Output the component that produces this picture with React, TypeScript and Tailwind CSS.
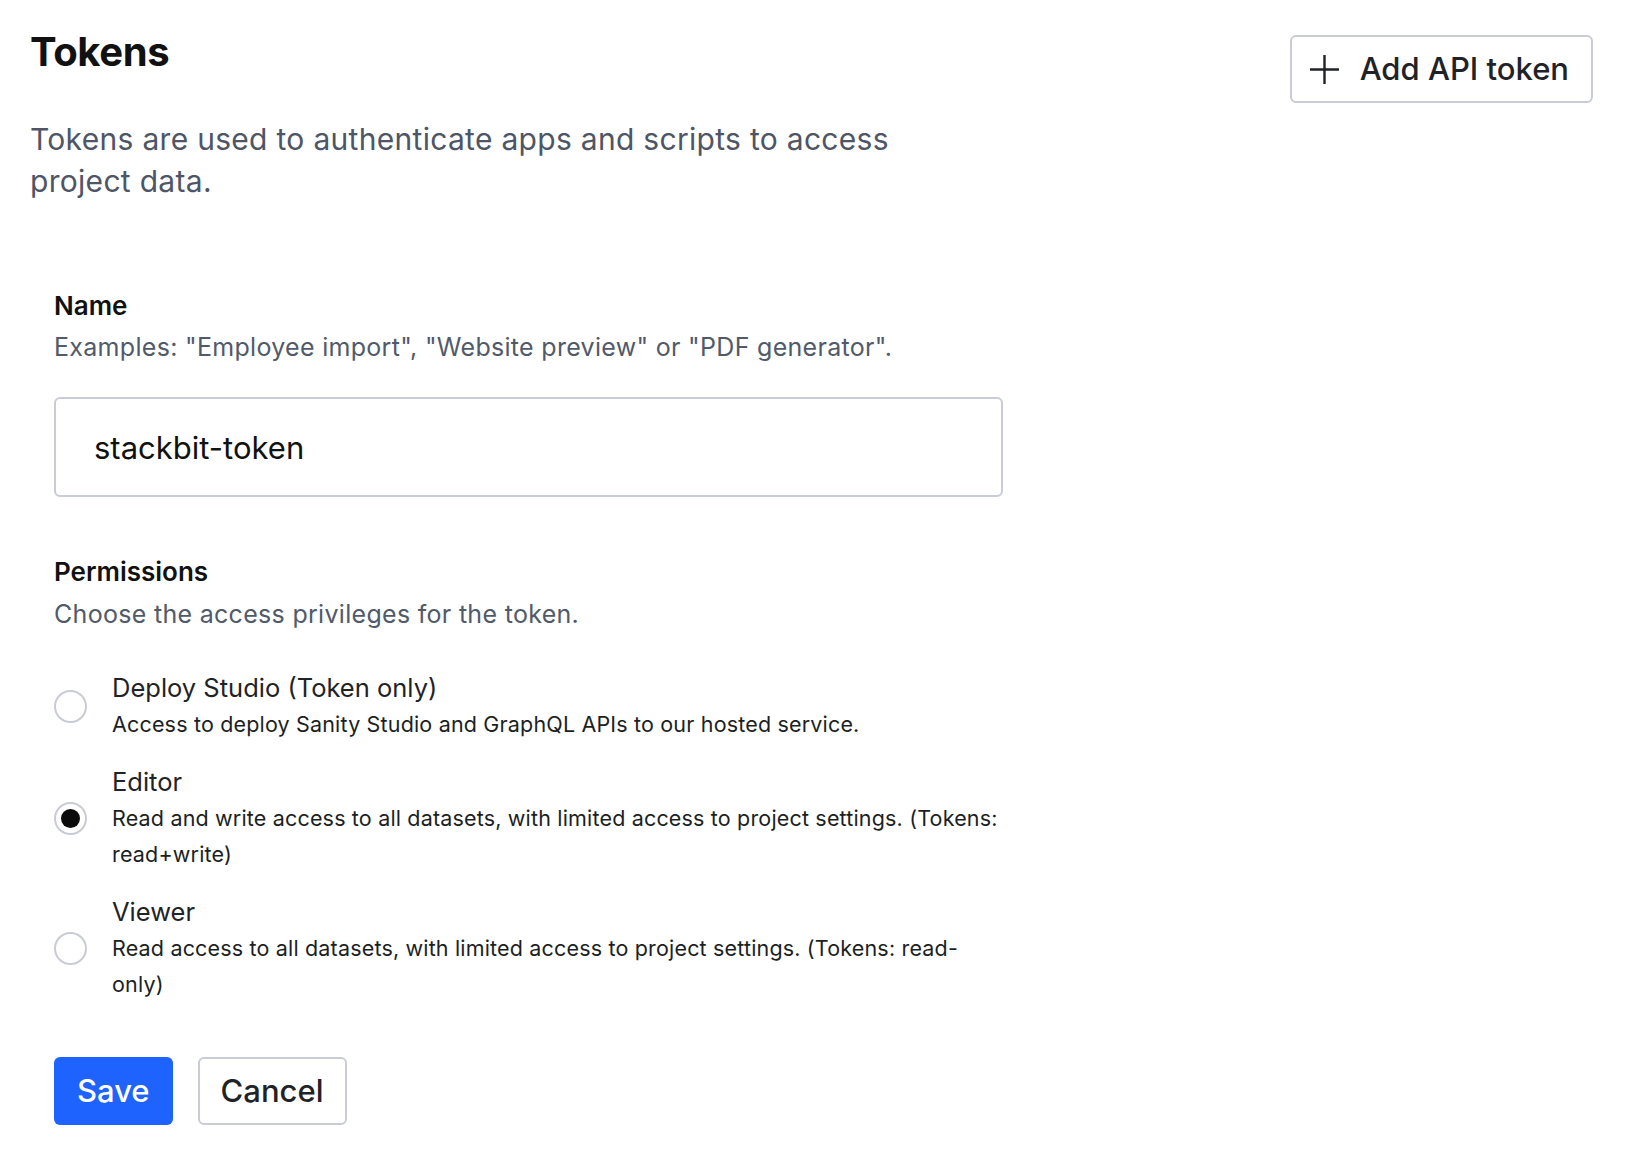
import React, { useState } from 'react';

const permissionOptions = [
  {
    id: 'deploy',
    title: 'Deploy Studio (Token only)',
    description: 'Access to deploy Sanity Studio and GraphQL APIs to our hosted service.',
  },
  {
    id: 'editor',
    title: 'Editor',
    description: 'Read and write access to all datasets, with limited access to project settings. (Tokens: read+write)',
  },
  {
    id: 'viewer',
    title: 'Viewer',
    description: 'Read access to all datasets, with limited access to project settings. (Tokens: read-only)',
  },
];

function PlusIcon() {
  return (
    <svg width="31" height="31" viewBox="0 0 31 31" fill="none" className="shrink-0">
      <path d="M15.5 1v29M1 15.5h29" stroke="#1f2328" strokeWidth="2.4" />
    </svg>
  );
}

export default function App() {
  const [permission, setPermission] = useState('editor');
  const [name, setName] = useState('stackbit-token');

  return (
    <div className="min-h-screen bg-white font-['Inter',sans-serif] text-[#1f2328]">
      <div className="pl-[30px] pr-[37px] pt-[28px]">
        {/* Header */}
        <div className="flex items-start justify-between">
          <div>
            <h1 className="text-[40px] leading-[48px] font-bold text-[#111111] tracking-[-0.01em]">Tokens</h1>
            <p className="mt-[42px] max-w-[900px] text-[30px] leading-[42px] tracking-[0.01em] text-[#4d5566]">
              Tokens are used to authenticate apps and scripts to access project data.
            </p>
          </div>
          <button
            type="button"
            className="mt-[7px] flex h-[68px] items-center gap-[20px] rounded-[6px] border-2 border-[#c9ccd4] bg-white pl-[17px] pr-[22px] text-[31px] font-medium text-[#1f2328]"
          >
            <PlusIcon />
            <span>Add API token</span>
          </button>
        </div>

        {/* Form */}
        <form className="ml-[24px] mt-[86px] w-[949px]" onSubmit={(e) => e.preventDefault()}>
          <label htmlFor="token-name" className="block text-[26px] leading-[36px] font-semibold text-[#111111]">
            Name
          </label>
          <p className="mt-[5px] text-[25px] leading-[36px] tracking-[0.012em] text-[#515a6a]">
            Examples: "Employee import", "Website preview" or "PDF generator".
          </p>
          <input
            id="token-name"
            value={name}
            onChange={(e) => setName(e.target.value)}
            className="mt-[32px] block h-[100px] w-full rounded-[6px] border-2 border-[#c9ccd4] bg-white pl-[38px] text-[31px] text-[#111111] outline-none"
          />

          <div className="mt-[57px] text-[26px] leading-[36px] font-semibold text-[#111111]">Permissions</div>
          <p className="mt-[6px] text-[25px] leading-[36px] tracking-[0.012em] text-[#515a6a]">
            Choose the access privileges for the token.
          </p>

          <div className="mt-[38px] flex w-[948px] flex-col gap-[22px]">
            {permissionOptions.map((opt) => {
              const checked = permission === opt.id;
              return (
                <label key={opt.id} className="flex cursor-pointer items-center gap-[25px]">
                  <input
                    type="radio"
                    name="permission"
                    className="sr-only"
                    checked={checked}
                    onChange={() => setPermission(opt.id)}
                  />
                  <span className="flex h-[33px] w-[33px] shrink-0 items-center justify-center rounded-full border-2 border-[#c9ccd4] bg-white">
                    {checked && <span className="h-[19px] w-[19px] rounded-full bg-[#0b0b0b]" />}
                  </span>
                  <span className="flex flex-col">
                    <span className="text-[25.5px] leading-[36px] text-[#1f2328]">{opt.title}</span>
                    <span className="text-[21.5px] leading-[36px] tracking-[0.008em] text-[#1b1f24]">{opt.description}</span>
                  </span>
                </label>
              );
            })}
          </div>

          <div className="mt-[55px] flex gap-[25px]">
            <button
              type="submit"
              className="h-[68px] rounded-[6px] border-2 border-transparent bg-[#1f63fe] px-[21px] text-[31px] font-medium text-white"
            >
              Save
            </button>
            <button
              type="button"
              className="h-[68px] rounded-[6px] border-2 border-[#c9ccd4] bg-white px-[21px] text-[31px] font-medium text-[#1f2328]"
            >
              Cancel
            </button>
          </div>
        </form>
      </div>
    </div>
  );
}
